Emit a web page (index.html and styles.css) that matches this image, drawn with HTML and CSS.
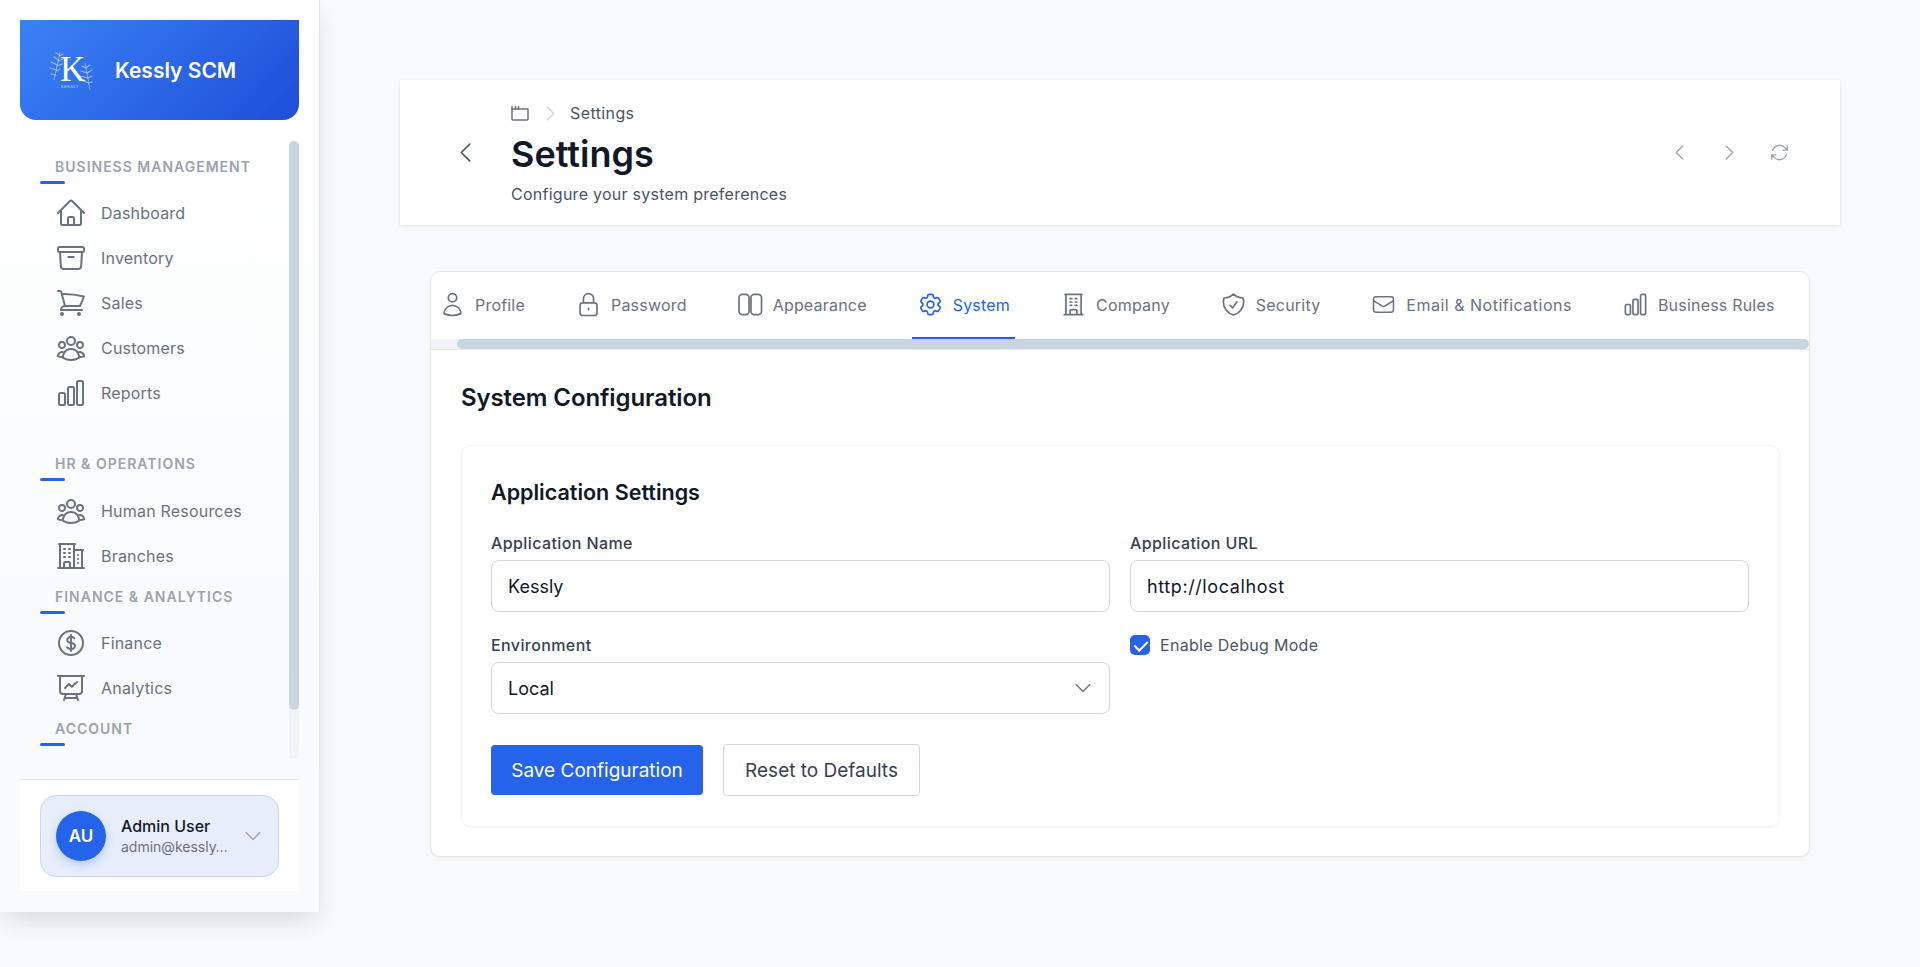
FILE: index.html
```html
<!DOCTYPE html>
<html lang="en">
<head>
    <meta charset="UTF-8">
    <meta name="viewport" content="width=device-width, initial-scale=1.0">
    <title>Settings - Kessly SCM</title>
    <link rel="stylesheet" href="styles.css">
</head>
<body>
    <!-- icon sprite -->
    <svg class="sprite" xmlns="http://www.w3.org/2000/svg">
        <symbol id="i-home" viewBox="0 0 24 24"><path d="m2.25 12 8.954-8.955c.44-.439 1.152-.439 1.591 0L21.75 12M4.5 9.75v10.125c0 .621.504 1.125 1.125 1.125H9.75v-4.875c0-.621.504-1.125 1.125-1.125h2.25c.621 0 1.125.504 1.125 1.125V21h4.125c.621 0 1.125-.504 1.125-1.125V9.75M8.25 21h8.25"/></symbol>
        <symbol id="i-box" viewBox="0 0 24 24"><path d="m20.25 7.5-.625 10.632a2.25 2.25 0 0 1-2.247 2.118H6.622a2.25 2.25 0 0 1-2.247-2.118L3.75 7.5M10 11.25h4M3.375 7.5h17.25c.621 0 1.125-.504 1.125-1.125v-1.5c0-.621-.504-1.125-1.125-1.125H3.375c-.621 0-1.125.504-1.125 1.125v1.5c0 .621.504 1.125 1.125 1.125Z"/></symbol>
        <symbol id="i-cart" viewBox="0 0 24 24"><path d="M2.25 3h1.386c.51 0 .955.343 1.087.835l.383 1.437M7.5 14.25a3 3 0 0 0-3 3h15.75m-12.75-3h11.218c1.121-2.3 2.1-4.684 2.924-7.138a60.114 60.114 0 0 0-16.536-1.84M7.5 14.25 5.106 5.272M6 20.25a.75.75 0 1 1-1.5 0 .75.75 0 0 1 1.5 0Zm12.75 0a.75.75 0 1 1-1.5 0 .75.75 0 0 1 1.5 0Z"/></symbol>
        <symbol id="i-group" viewBox="0 0 24 24"><path d="M18 18.72a9.094 9.094 0 0 0 3.741-.479 3 3 0 0 0-4.682-2.72m.94 3.198.001.031c0 .225-.012.447-.037.666A11.944 11.944 0 0 1 12 21c-2.17 0-4.207-.576-5.963-1.584A6.062 6.062 0 0 1 6 18.719m12 0a5.971 5.971 0 0 0-.941-3.197m0 0A5.995 5.995 0 0 0 12 12.75a5.995 5.995 0 0 0-5.058 2.772m0 0a3 3 0 0 0-4.681 2.72 8.986 8.986 0 0 0 3.74.477m.94-3.197a5.971 5.971 0 0 0-.94 3.197M15 6.75a3 3 0 1 1-6 0 3 3 0 0 1 6 0Zm6 3a2.25 2.25 0 1 1-4.5 0 2.25 2.25 0 0 1 4.5 0Zm-13.5 0a2.25 2.25 0 1 1-4.5 0 2.25 2.25 0 0 1 4.5 0Z"/></symbol>
        <symbol id="i-bars" viewBox="0 0 24 24"><path d="M3 13.125C3 12.504 3.504 12 4.125 12h2.25c.621 0 1.125.504 1.125 1.125v6.75C7.5 20.496 6.996 21 6.375 21h-2.25A1.125 1.125 0 0 1 3 19.875v-6.75ZM9.75 8.625c0-.621.504-1.125 1.125-1.125h2.25c.621 0 1.125.504 1.125 1.125v11.25c0 .621-.504 1.125-1.125 1.125h-2.25a1.125 1.125 0 0 1-1.125-1.125V8.625ZM16.5 4.125c0-.621.504-1.125 1.125-1.125h2.25C20.496 3 21 3.504 21 4.125v15.75c0 .621-.504 1.125-1.125 1.125h-2.25a1.125 1.125 0 0 1-1.125-1.125V4.125Z"/></symbol>
        <symbol id="i-offices" viewBox="0 0 24 24"><path d="M2.25 21h19.5m-18-18v18m10.5-18v18m6-13.5V21M6.75 6.75h.75m-.75 3h.75m-.75 3h.75m3-6h.75m-.75 3h.75m-.75 3h.75M6.75 21v-3.375c0-.621.504-1.125 1.125-1.125h2.25c.621 0 1.125.504 1.125 1.125V21M3 3h12m-.75 4.5H21m-3.75 3.75h.008v.008h-.008v-.008Zm0 3h.008v.008h-.008v-.008Zm0 3h.008v.008h-.008v-.008Z"/></symbol>
        <symbol id="i-dollar" viewBox="0 0 24 24"><path d="M12 6v12m-3-2.818.879.659c1.171.879 3.07.879 4.242 0 1.172-.879 1.172-2.303 0-3.182C13.536 12.219 12.768 12 12 12c-.725 0-1.45-.22-2.003-.659-1.106-.879-1.106-2.303 0-3.182s2.9-.879 4.006 0l.415.33M21 12a9 9 0 1 1-18 0 9 9 0 0 1 18 0Z"/></symbol>
        <symbol id="i-board" viewBox="0 0 24 24"><path d="M3.75 3v11.25A2.25 2.25 0 0 0 6 16.5h2.25M3.75 3h-1.5m1.5 0h16.5m0 0h1.5m-1.5 0v11.25A2.25 2.25 0 0 1 18 16.5h-2.25m-7.5 0h7.5m-7.5 0-1 3m8.5-3 1 3m0 0 .5 1.5m-.5-1.5h-9.5m0 0-.5 1.5m.75-9 3-3 2.148 2.148A12.061 12.061 0 0 1 16.5 7.605"/></symbol>
        <symbol id="i-user" viewBox="0 0 24 24"><path d="M15.75 6a3.75 3.75 0 1 1-7.5 0 3.75 3.75 0 0 1 7.5 0ZM4.501 20.118a7.5 7.5 0 0 1 14.998 0A17.933 17.933 0 0 1 12 21.75c-2.676 0-5.216-.584-7.499-1.632Z"/></symbol>
        <symbol id="i-lock" viewBox="0 0 24 24"><path d="M16.5 10.5V6.75a4.5 4.5 0 1 0-9 0v3.75m-.75 11.25h10.5a2.25 2.25 0 0 0 2.25-2.25v-6.75a2.25 2.25 0 0 0-2.25-2.25H6.75a2.25 2.25 0 0 0-2.25 2.25v6.75a2.25 2.25 0 0 0 2.25 2.25Z"/><path d="M12 15.500v1"/></symbol>
        <symbol id="i-columns" viewBox="0 0 24 24"><rect x="1.800" y="3" width="8.900" height="18" rx="3"/><rect x="12.400" y="3" width="9.400" height="18" rx="3"/></symbol>
        <symbol id="i-cog" viewBox="0 0 24 24"><path d="M9.594 3.94c.09-.542.56-.94 1.11-.94h2.593c.55 0 1.02.398 1.11.94l.213 1.281c.063.374.313.686.645.87.074.04.147.083.22.127.325.196.72.257 1.075.124l1.217-.456a1.125 1.125 0 0 1 1.37.49l1.296 2.247a1.125 1.125 0 0 1-.26 1.431l-1.003.827c-.293.241-.438.613-.43.992a7.723 7.723 0 0 1 0 .255c-.008.378.137.75.43.991l1.004.827c.424.35.534.955.26 1.43l-1.298 2.247a1.125 1.125 0 0 1-1.369.491l-1.217-.456c-.355-.133-.75-.072-1.076.124a6.47 6.47 0 0 1-.22.128c-.331.183-.581.495-.644.869l-.213 1.281c-.09.543-.56.94-1.11.94h-2.594c-.55 0-1.019-.398-1.11-.94l-.213-1.281c-.062-.374-.312-.686-.644-.87a6.52 6.52 0 0 1-.22-.127c-.325-.196-.72-.257-1.076-.124l-1.217.456a1.125 1.125 0 0 1-1.369-.49l-1.297-2.247a1.125 1.125 0 0 1 .26-1.431l1.004-.827c.292-.24.437-.613.43-.991a6.932 6.932 0 0 1 0-.255c.007-.38-.138-.751-.43-.992l-1.004-.827a1.125 1.125 0 0 1-.26-1.43l1.297-2.247a1.125 1.125 0 0 1 1.37-.491l1.216.456c.356.133.751.072 1.076-.124.072-.044.146-.086.22-.128.332-.183.582-.495.644-.869l.214-1.28Z"/><path d="M15 12a3 3 0 1 1-6 0 3 3 0 0 1 6 0Z"/></symbol>
        <symbol id="i-office" viewBox="0 0 24 24"><path d="M3.75 21h16.5M4.5 3h15M5.25 3v18m13.5-18v18M9 6.75h1.5m-1.5 3h1.5m-1.5 3h1.5m3-6H15m-1.5 3H15m-1.5 3H15M9 21v-3.375c0-.621.504-1.125 1.125-1.125h3.75c.621 0 1.125.504 1.125 1.125V21"/></symbol>
        <symbol id="i-shield" viewBox="0 0 24 24"><path d="M9 12.75 11.25 15 15 9.75m-3-7.036A11.959 11.959 0 0 1 3.598 6 11.99 11.99 0 0 0 3 9.749c0 5.592 3.824 10.29 9 11.623 5.176-1.332 9-6.03 9-11.622 0-1.31-.21-2.571-.598-3.751h-.152c-3.196 0-6.1-1.248-8.25-3.285Z"/></symbol>
        <symbol id="i-mail" viewBox="-1.200 -1.200 26.400 26.400"><path d="M21.75 6.75v10.5a2.25 2.25 0 0 1-2.25 2.25h-15a2.25 2.25 0 0 1-2.25-2.25V6.75m19.5 0A2.25 2.25 0 0 0 19.5 4.5h-15a2.25 2.25 0 0 0-2.25 2.25m19.5 0v.243a2.25 2.25 0 0 1-1.07 1.916l-7.5 4.615a2.25 2.25 0 0 1-2.36 0L3.32 8.91a2.25 2.25 0 0 1-1.07-1.916V6.75"/></symbol>
        <symbol id="i-left" viewBox="0 0 24 24"><path d="M15.75 19.5 8.25 12l7.5-7.5"/></symbol>
        <symbol id="i-right" viewBox="0 0 24 24"><path d="m8.25 4.5 7.5 7.5-7.5 7.5"/></symbol>
        <symbol id="i-down" viewBox="0 0 24 24"><path d="m19.5 8.25-7.5 7.5-7.5-7.5"/></symbol>
        <symbol id="i-refresh" viewBox="0 0 24 24"><path d="M16.023 9.348h4.992M2.985 19.644v-4.992m0 0h4.992m-4.993 0 3.181 3.183a8.25 8.25 0 0 0 13.803-3.7M4.031 9.865a8.25 8.25 0 0 1 13.803-3.7l3.181 3.182m0-4.991v4.99"/></symbol>
        <symbol id="i-crumb" viewBox="0 0 22 22"><path d="M3 7h16v10a1 1 0 0 1-1 1H4a1 1 0 0 1-1-1V7Z"/><path d="M3 7V4.500M6.500 4.500V7M9.500 4.500V7"/></symbol>
    </svg>

    <div class="app">
        <aside class="sidebar">
            <div class="brand">
                <svg class="brand-logo" viewBox="0 0 44 42" xmlns="http://www.w3.org/2000/svg">
                    <g class="leaf-stem">
                        <path d="M5 31 L11 3"/>
                        <path d="M41 41 L36 14"/>
                    </g>
                    <g class="leaf">
                        <path d="M10.500 6 L7 4 M10.500 7 L14 5 M9.500 11 L5 8 M9.500 12 L14 10 M8.500 16 L2 13 M8.500 17 L13 15 M7.500 21 L1 19 M7.500 22 L11 20 M6.500 26 L2 25"/>
                        <path d="M37 19 L41 16 M37 19 L33 17 M38 24 L43 21 M38 24 L32 22 M39 29 L43 27 M39 29 L31 27 M40 34 L43 33 M40 34 L34 32"/>
                    </g>
                    <text class="logo-k" x="11" y="32">K</text>
                    <text class="logo-name" x="12" y="39">KESSLY</text>
                </svg>
                <span class="brand-name">Kessly SCM</span>
            </div>

            <div class="nav-wrap">
                <nav class="nav">
                    <div class="nav-section nav-section-first">
                        <h3 class="nav-title">BUSINESS MANAGEMENT</h3>
                        <a class="nav-item"><svg class="icon nav-icon"><use href="#i-home"/></svg>Dashboard</a>
                        <a class="nav-item"><svg class="icon nav-icon"><use href="#i-box"/></svg>Inventory</a>
                        <a class="nav-item"><svg class="icon nav-icon"><use href="#i-cart"/></svg>Sales</a>
                        <a class="nav-item"><svg class="icon nav-icon"><use href="#i-group"/></svg>Customers</a>
                        <a class="nav-item"><svg class="icon nav-icon"><use href="#i-bars"/></svg>Reports</a>
                    </div>
                    <div class="nav-section">
                        <h3 class="nav-title">HR &amp; OPERATIONS</h3>
                        <a class="nav-item"><svg class="icon nav-icon"><use href="#i-group"/></svg>Human Resources</a>
                        <a class="nav-item"><svg class="icon nav-icon"><use href="#i-offices"/></svg>Branches</a>
                    </div>
                    <div class="nav-section">
                        <h3 class="nav-title">FINANCE &amp; ANALYTICS</h3>
                        <a class="nav-item"><svg class="icon nav-icon"><use href="#i-dollar"/></svg>Finance</a>
                        <a class="nav-item"><svg class="icon nav-icon"><use href="#i-board"/></svg>Analytics</a>
                    </div>
                    <div class="nav-section">
                        <h3 class="nav-title">ACCOUNT</h3>
                    </div>
                </nav>
                <div class="side-scroll"><div class="side-thumb"></div></div>
            </div>

            <div class="side-foot">
                <div class="user-card">
                    <div class="avatar">AU</div>
                    <div class="user-info">
                        <div class="user-name">Admin User</div>
                        <div class="user-mail">admin@kessly…</div>
                    </div>
                    <svg class="icon user-chev"><use href="#i-down"/></svg>
                </div>
            </div>
        </aside>

        <main class="main">
            <header class="page-head">
                <svg class="icon back-btn"><use href="#i-left"/></svg>
                <div class="head-text">
                    <div class="crumbs">
                        <svg class="icon crumb-icon"><use href="#i-crumb"/></svg>
                        <svg class="icon crumb-sep"><use href="#i-right"/></svg>
                        <span>Settings</span>
                    </div>
                    <h1>Settings</h1>
                    <p>Configure your system preferences</p>
                </div>
                <div class="head-tools">
                    <svg class="icon"><use href="#i-left"/></svg>
                    <svg class="icon"><use href="#i-right"/></svg>
                    <svg class="icon"><use href="#i-refresh"/></svg>
                </div>
            </header>

            <section class="panel">
                <div class="tabs">
                    <a class="tab"><svg class="icon"><use href="#i-user"/></svg>Profile</a>
                    <a class="tab"><svg class="icon"><use href="#i-lock"/></svg>Password</a>
                    <a class="tab"><svg class="icon"><use href="#i-columns"/></svg>Appearance</a>
                    <a class="tab active"><svg class="icon"><use href="#i-cog"/></svg>System</a>
                    <a class="tab"><svg class="icon"><use href="#i-office"/></svg>Company</a>
                    <a class="tab"><svg class="icon"><use href="#i-shield"/></svg>Security</a>
                    <a class="tab tab-wide"><svg class="icon"><use href="#i-mail"/></svg>Email &amp; Notifications</a>
                    <a class="tab"><svg class="icon"><use href="#i-bars"/></svg>Business Rules</a>
                </div>
                <div class="tab-scroll"><div class="tab-thumb"></div></div>

                <div class="panel-body">
                    <h2>System Configuration</h2>
                    <div class="inner-card">
                        <h3 class="card-title">Application Settings</h3>
                        <div class="form-grid">
                            <div class="field">
                                <label for="app-name">Application Name</label>
                                <input id="app-name" type="text" value="Kessly">
                            </div>
                            <div class="field">
                                <label for="app-url">Application URL</label>
                                <input id="app-url" type="text" value="http://localhost">
                            </div>
                            <div class="field">
                                <label for="app-env">Environment</label>
                                <div class="select-wrap">
                                    <select id="app-env"><option>Local</option><option>Production</option></select>
                                    <svg class="icon select-chev"><use href="#i-down"/></svg>
                                </div>
                            </div>
                            <label class="check-row"><input type="checkbox" checked>Enable Debug Mode</label>
                        </div>
                        <div class="actions">
                            <button class="btn btn-primary">Save Configuration</button>
                            <button class="btn btn-outline">Reset to Defaults</button>
                        </div>
                    </div>
                </div>
            </section>
        </main>
    </div>
</body>
</html>
```

FILE: styles.css
```css
* {
    box-sizing: border-box;
}
body {
    margin: 0;
    background-color: #f8f9fb;
    font-family: Inter, "Noto Sans", sans-serif;
    color: #111827;
}
h1, h2, h3, p {
    margin: 0;
}
.sprite {
    display: none;
}
.icon {
    fill: none;
    stroke: currentColor;
    stroke-width: 1.5;
    stroke-linecap: round;
    stroke-linejoin: round;
    flex: none;
}
.app {
    display: flex;
    align-items: flex-start;
    min-height: 967px;
}

/* sidebar */
.sidebar {
    position: relative;
    z-index: 1;
    width: 320px;
    height: 912px;
    flex: none;
    padding: 20px 20px 21px;
    display: flex;
    flex-direction: column;
    background: linear-gradient(180deg, #ffffff 0%, #f8fafc 100%);
    border-right: 1px solid #e5e7eb;
    box-shadow: 0 12px 22px -4px rgba(0, 0, 0, 0.12);
}
.brand {
    height: 100px;
    flex: none;
    display: flex;
    align-items: center;
    padding-left: 29px;
    gap: 22px;
    background: linear-gradient(135deg, #3b82f6, #1d4ed8);
    border-radius: 0 0 16px 16px;
}
.brand-logo {
    width: 44px;
    height: 42px;
}
.leaf-stem {
    fill: none;
    stroke: #dbe7ff;
    stroke-width: 0.5;
}
.leaf {
    fill: none;
    stroke: #dbe7ff;
    stroke-width: 1.1;
    stroke-linecap: round;
    opacity: 0.6;
}
.logo-k {
    font-family: "Liberation Serif", serif;
    font-size: 35px;
    fill: #ffffff;
}
.logo-name {
    font-family: "Liberation Sans", sans-serif;
    font-size: 3.500px;
    letter-spacing: 0.8px;
    fill: #dbe7ff;
}
.brand-name {
    color: #ffffff;
    font-size: 21px;
    font-weight: 600;
}
.nav-wrap {
    flex: 1;
    display: flex;
    padding: 21px 0 20px;
    min-height: 0;
}
.nav {
    flex: 1;
    min-width: 0;
    padding: 16px 0 0 20px;
}
.nav-section {
    margin-top: 8.5px;
}
.nav-section-first {
    margin-top: 0;
}
.nav-section-first + .nav-section {
    margin-top: 39px;
}
.nav-title {
    font-size: 14px;
    line-height: 20px;
    font-weight: 600;
    letter-spacing: 1px;
    color: #9ca3af;
    padding-left: 15px;
    margin-bottom: 7px;
}
.nav-section-first .nav-title {
    margin-bottom: 6px;
}
.nav-title::after {
    content: "";
    display: block;
    width: 25px;
    height: 3px;
    margin: 4px 0 0 -15px;
    background-color: #2563eb;
    border-radius: 2px;
}
.nav-item {
    height: 45px;
    display: flex;
    align-items: center;
    gap: 14px;
    padding-left: 15px;
    font-size: 16px;
    letter-spacing: 0.2px;
    color: #6b7280;
}
.nav-icon {
    width: 32px;
    height: 32px;
}
.side-scroll {
    width: 10px;
    flex: none;
    background-color: #f1f5f9;
    border-radius: 5px;
}
.side-thumb {
    height: 569px;
    background-color: #cbd5e1;
    border-radius: 5px;
}
.side-foot {
    flex: none;
    height: 112px;
    padding: 15px 20px 0;
    background-color: #ffffff;
    border-top: 1px solid #e5e7eb;
}
.user-card {
    height: 82px;
    display: flex;
    align-items: center;
    padding: 0 14px 0 15px;
    border: 1px solid #c7d7f5;
    border-radius: 16px;
    background-color: #e8eefb;
}
.avatar {
    width: 50px;
    height: 50px;
    flex: none;
    display: flex;
    align-items: center;
    justify-content: center;
    border-radius: 50%;
    background-color: #2563eb;
    color: #ffffff;
    font-size: 17px;
    font-weight: 600;
    box-shadow: 0 4px 10px rgba(37, 99, 235, 0.25);
}
.user-info {
    flex: 1;
    min-width: 0;
    margin-left: 15px;
}
.user-name {
    font-size: 16px;
    font-weight: 500;
    line-height: 22px;
    color: #111827;
}
.user-mail {
    font-size: 14px;
    line-height: 20px;
    color: #6b7280;
}
.user-chev {
    width: 22px;
    height: 22px;
    color: #9ca3af;
}

/* main */
.main {
    flex: 1;
    min-width: 0;
    padding: 80px 80px 0;
}
.page-head {
    height: 145px;
    display: flex;
    align-items: center;
    padding: 0 50px 0 52px;
    background-color: #ffffff;
    box-shadow: 0 1px 3px rgba(0, 0, 0, 0.1);
}
.back-btn {
    width: 27px;
    height: 27px;
    color: #4b5563;
}
.head-text {
    flex: 1;
    margin: 3px 0 0 32px;
}
.crumbs {
    display: flex;
    align-items: center;
    font-size: 16px;
    line-height: 20px;
    letter-spacing: 0.4px;
    color: #4b5563;
}
.crumb-icon {
    width: 22px;
    height: 22px;
    margin-left: -2px;
    color: #6b7280;
}
.crumb-sep {
    width: 21px;
    height: 21px;
    margin: 0 9px 0 9px;
    color: #d1d5db;
}
.page-head h1 {
    font-size: 36px;
    line-height: 50px;
    font-weight: 600;
    margin-top: 5px;
    color: #111827;
}
.page-head p {
    font-size: 16px;
    line-height: 24px;
    letter-spacing: 0.26px;
    margin-top: 3px;
    color: #4b5563;
}
.head-tools {
    display: flex;
    gap: 29px;
    color: #9ca3af;
}
.head-tools .icon {
    width: 21px;
    height: 21px;
}
.panel {
    margin: 46px 30px 0;
    background-color: #ffffff;
    border: 1px solid #e5e7eb;
    border-radius: 10px;
    box-shadow: 0 1px 2px rgba(0, 0, 0, 0.05);
}
.tabs {
    height: 67px;
    display: flex;
    overflow: hidden;
    padding-left: 3px;
    gap: 40px;
}
.tab {
    display: flex;
    align-items: center;
    gap: 9px;
    padding: 0 5px;
    font-size: 16px;
    letter-spacing: 0.2px;
    color: #6b7280;
    border-bottom: 2px solid transparent;
    white-space: nowrap;
}
.tab-wide {
    letter-spacing: 0.5px;
}
.tab .icon {
    width: 27px;
    height: 27px;
}
.tab.active {
    color: #2563eb;
    border-bottom-color: #2563eb;
}
.tab-scroll {
    height: 10px;
    background-color: #f1f5f9;
    border-radius: 0 5px 5px 0;
    padding-left: 26px;
}
.tab-thumb {
    height: 10px;
    background-color: #cbd5e1;
    border-radius: 5px;
}
.panel-body {
    padding: 32px 29px 29px 30px;
    border-top: 1px solid #e5e7eb;
}
.panel-body h2 {
    font-size: 24px;
    line-height: 32px;
    letter-spacing: -0.1px;
    font-weight: 600;
    color: #111827;
    margin-bottom: 31px;
}
.inner-card {
    padding: 30px 30px 30px 29px;
    background-color: #ffffff;
    border: 1px solid #f3f4f6;
    border-radius: 10px;
    box-shadow: 0 1px 2px rgba(0, 0, 0, 0.05);
}
.card-title {
    font-size: 21.500px;
    line-height: 32px;
    font-weight: 600;
    color: #111827;
    margin-bottom: 23px;
}
.form-grid {
    display: grid;
    grid-template-columns: 1fr 1fr;
    gap: 21px 20px;
}
.field label {
    display: block;
    font-size: 16px;
    line-height: 24px;
    font-weight: 500;
    letter-spacing: 0.4px;
    color: #374151;
    margin-bottom: 5px;
}
.field input,
.field select {
    width: 100%;
    height: 52px;
    padding: 0 16px;
    font-family: inherit;
    font-size: 18px;
    color: #111827;
    background-color: #ffffff;
    border: 1px solid #d1d5db;
    border-radius: 8px;
    appearance: none;
    outline: none;
}
#app-url {
    letter-spacing: 0.6px;
}
.select-wrap {
    position: relative;
}
.select-chev {
    position: absolute;
    right: 16px;
    top: 15px;
    width: 22px;
    height: 22px;
    color: #6b7280;
}
.check-row {
    display: flex;
    align-items: center;
    align-self: start;
    gap: 10px;
    height: 24px;
    font-size: 16px;
    letter-spacing: 0.3px;
    color: #4b5563;
}
.check-row input {
    appearance: none;
    width: 20px;
    height: 20px;
    margin: 0;
    position: relative;
    background-color: #2563eb;
    border-radius: 5px;
}
.check-row input::after {
    content: "";
    position: absolute;
    left: 7px;
    top: 3px;
    width: 6px;
    height: 11px;
    border: solid #ffffff;
    border-width: 0 2px 2px 0;
    transform: rotate(45deg);
}
.actions {
    display: flex;
    align-items: center;
    gap: 20px;
    margin-top: 30px;
}
.btn {
    height: 50px;
    font-family: inherit;
    font-size: 19px;
    border-radius: 4px;
    cursor: pointer;
}
.btn-primary {
    width: 212px;
    background-color: #2563eb;
    color: #ffffff;
    border: none;
}
.btn-outline {
    width: 197px;
    height: 52px;
    background-color: #ffffff;
    color: #374151;
    border: 1px solid #d1d5db;
}
```
